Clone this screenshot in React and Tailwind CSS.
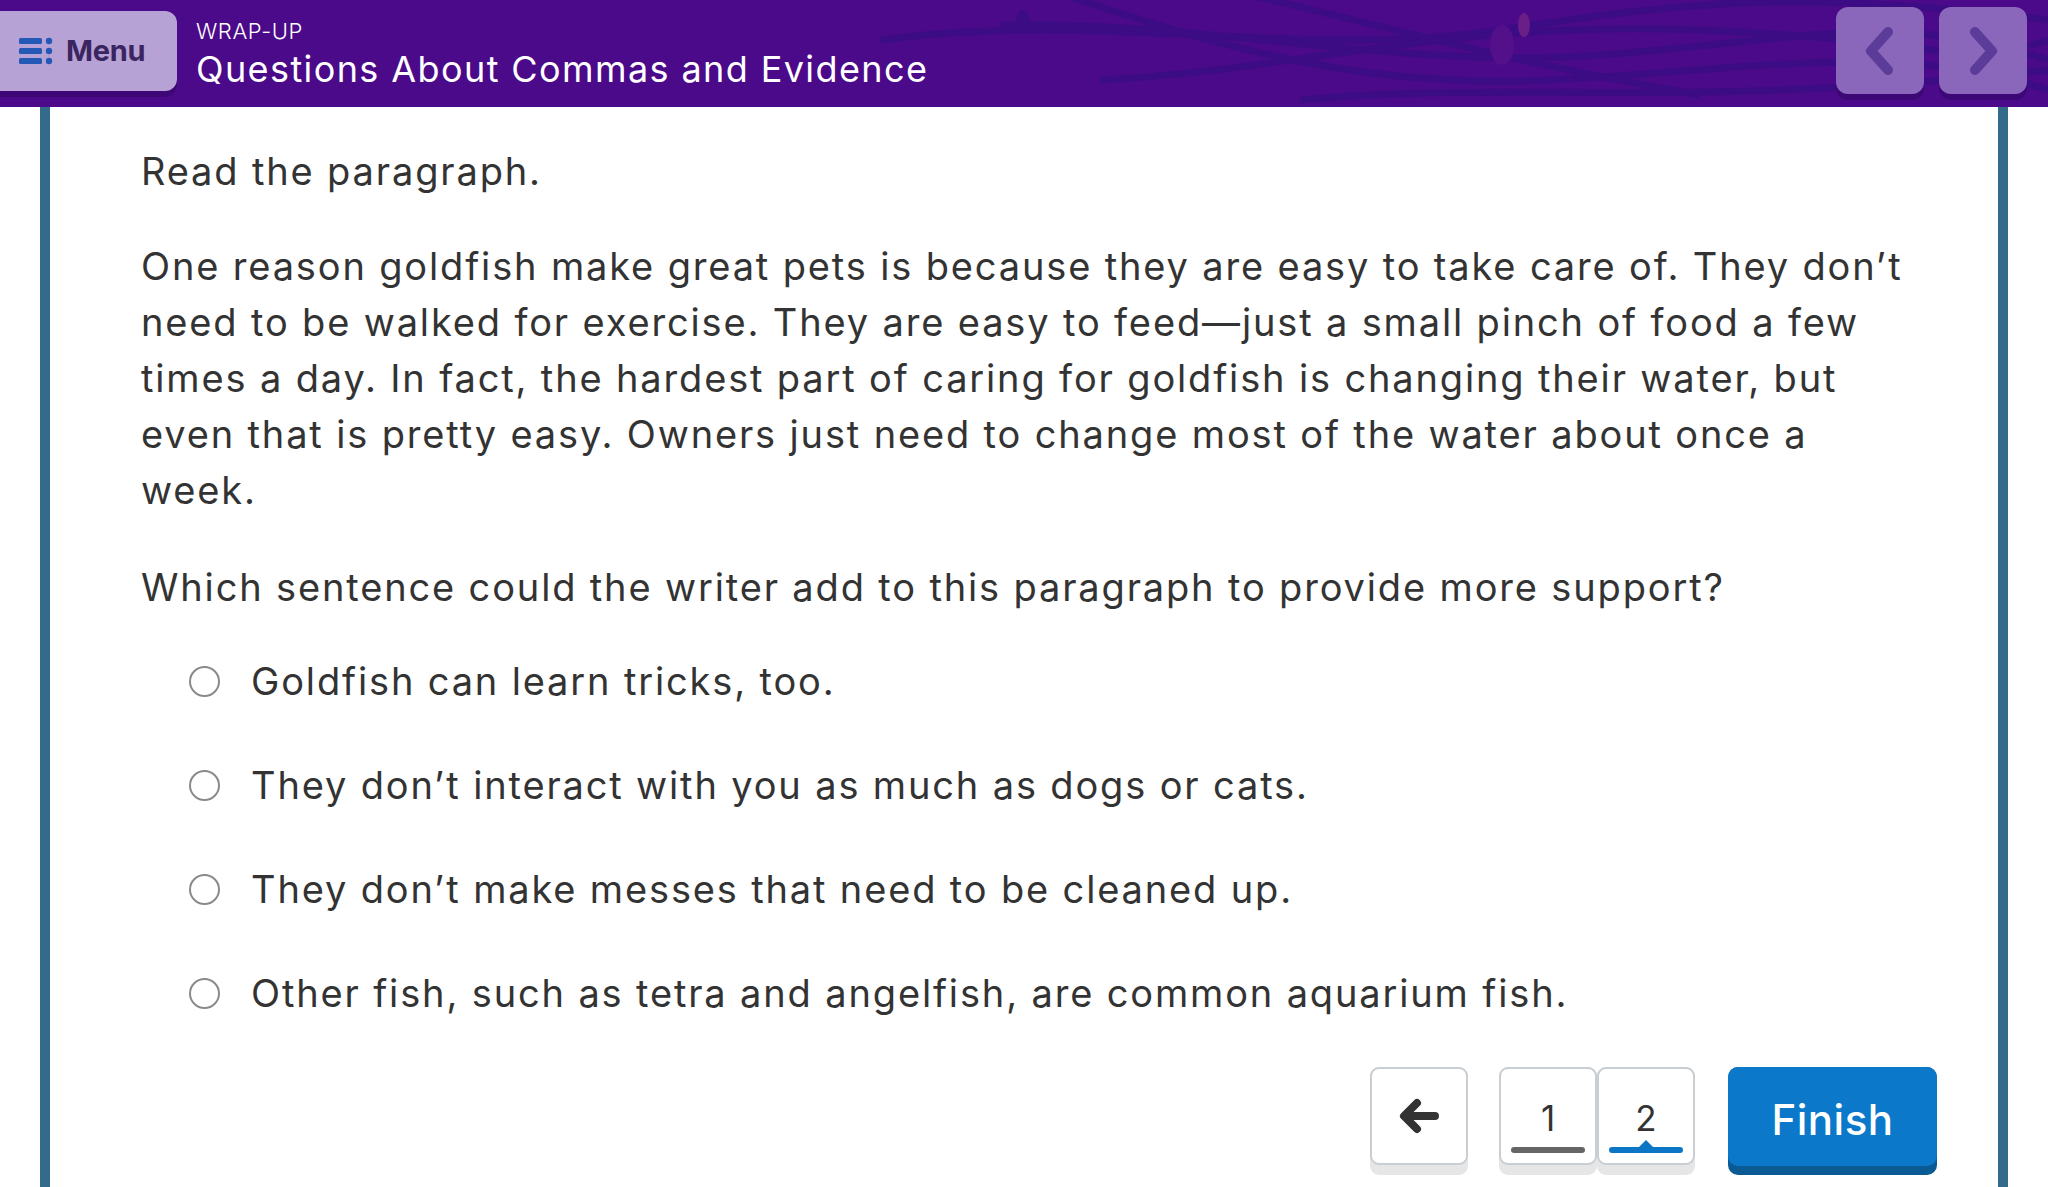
import React from "react";

const FONT = { fontFamily: "Inter, 'Noto Sans', sans-serif" };

function MenuIcon() {
  return (
    <svg width="34" height="28" viewBox="0 0 34 28">
      <rect x="0" y="1" width="23" height="6" rx="1.5" fill="#2358b6" />
      <rect x="0" y="11" width="23" height="6" rx="1.5" fill="#2358b6" />
      <rect x="0" y="21" width="23" height="6" rx="1.5" fill="#2358b6" />
      <circle cx="30" cy="4" r="3.2" fill="#2358b6" />
      <circle cx="30" cy="14" r="3.2" fill="#2358b6" />
      <circle cx="30" cy="24" r="3.2" fill="#2358b6" />
    </svg>
  );
}

function Chevron({ dir }) {
  const d = dir === "left" ? "M29 6 L12 25 L29 44" : "M13 6 L30 25 L13 44";
  return (
    <svg width="42" height="50" viewBox="0 0 42 50">
      <path d={d} fill="none" stroke="#5b3c98" strokeWidth="10" strokeLinecap="round" strokeLinejoin="round" />
    </svg>
  );
}

function Radio() {
  return <span className="block w-[31px] h-[31px] shrink-0 rounded-full border-[2.5px] border-[#8a8a8a] bg-white" />;
}

const options = [
  "Goldfish can learn tricks, too.",
  "They don\u2019t interact with you as much as dogs or cats.",
  "They don\u2019t make messes that need to be cleaned up.",
  "Other fish, such as tetra and angelfish, are common aquarium fish.",
];

export default function App() {
  return (
    <div className="w-[2048px] h-[1187px] overflow-hidden bg-white flex flex-col" style={FONT}>
      <header className="relative h-[107px] shrink-0 bg-[#4b0a89] overflow-hidden flex items-start">
        <svg className="absolute inset-0 pointer-events-none" width="2048" height="107" viewBox="0 0 2048 107">
          <g fill="none" stroke="#3c0c85" strokeWidth="7">
            <path d="M880 40 C1100 10 1300 60 1500 30 S1800 -10 2048 20" />
            <path d="M1000 25 C1200 20 1400 70 1600 55 S1900 10 2048 60" />
            <path d="M1050 -10 C1200 40 1350 90 1550 80 S1900 40 2048 90" />
            <path d="M1100 80 C1300 70 1450 20 1700 30 S1950 70 2048 40" />
            <path d="M1250 -5 C1400 30 1500 60 1700 95" />
            <path d="M1300 100 C1500 80 1700 110 2048 70" />
          </g>
          <ellipse cx="1023" cy="22" rx="7" ry="12" fill="#3c0c85" />
          <ellipse cx="1502" cy="45" rx="12" ry="20" fill="#540f8a" />
          <ellipse cx="1524" cy="25" rx="6" ry="12" fill="#6a1f88" />
          <ellipse cx="1868" cy="20" rx="8" ry="12" fill="#9a5aa0" opacity="0.6" />
        </svg>
        <div className="relative mt-[11px] w-[177px] h-[80px] bg-[#b7a2d6] rounded-r-[12px] flex items-center pl-[19px] gap-[13px] shadow-[0_6px_0_#3d0876]">
          <MenuIcon />
          <span className="text-[29px] font-bold text-[#3b2560] tracking-[-0.3px]">Menu</span>
        </div>
        <div className="relative ml-[19px] mt-[18px] flex flex-col text-white">
          <span className="text-[22px] font-light leading-[26px] tracking-[0.6px]">WRAP-UP</span>
          <span className="mt-[3px] text-[36px] font-normal leading-[44px] tracking-[1.4px]">Questions About Commas and Evidence</span>
        </div>
        <div className="relative ml-auto mr-[21px] mt-[7px] flex gap-[15px]">
          <div className="w-[88px] h-[87px] rounded-[12px] bg-[#8b67bb] flex items-center justify-center shadow-[0_6px_0_#3d0876]">
            <Chevron dir="left" />
          </div>
          <div className="w-[88px] h-[87px] rounded-[12px] bg-[#8b67bb] flex items-center justify-center shadow-[0_6px_0_#3d0876]">
            <Chevron dir="right" />
          </div>
        </div>
      </header>

      <main className="flex-1 mx-[40px] border-x-[10px] border-[#346b8b] pl-[91px] pr-[61px] pt-[36px] text-[#333333] text-[38px] leading-[56px] tracking-[1.85px]">
        <p>Read the paragraph.</p>
        <p className="mt-[39px] whitespace-nowrap">
          One reason goldfish make great pets is because they are easy to take care of. They don{"\u2019"}t
          <br />
          need to be walked for exercise. They are easy to feed{"\u2014"}just a small pinch of food a few
          <br />
          times a day. In fact, the hardest part of caring for goldfish is changing their water, but
          <br />
          even that is pretty easy. Owners just need to change most of the water about once a
          <br />
          week.
        </p>
        <p className="mt-[41px] whitespace-nowrap">
          Which sentence could the writer add to this paragraph to provide more support?
        </p>
        <div className="mt-[38px] flex flex-col gap-[48px] pl-[48px]">
          {options.map((o) => (
            <div key={o} className="flex items-center gap-[31px]">
              <Radio />
              <span className="whitespace-nowrap">{o}</span>
            </div>
          ))}
        </div>
        <div className="mt-[46px] flex justify-end items-start tracking-normal">
          <div className="w-[98px] h-[108px] rounded-[9px] bg-[#e6e6e6]">
            <div className="w-[98px] h-[98px] rounded-[9px] bg-white border-2 border-[#c9ced3] flex items-center justify-center">
              <svg width="44" height="40" viewBox="0 0 44 40">
                <path d="M38 20 H8 M20 7 L7 20 L20 33" fill="none" stroke="#333333" strokeWidth="8" strokeLinecap="round" strokeLinejoin="round" />
              </svg>
            </div>
          </div>
          <div className="ml-[31px] flex">
            <div className="w-[98px] h-[108px] rounded-[9px] bg-[#e6e6e6]">
              <div className="relative w-[98px] h-[98px] rounded-[9px] bg-white border-2 border-[#c9ced3] flex justify-center">
                <span className="mt-[29px] text-[35px] leading-[40px] text-[#333]">1</span>
                <span className="absolute left-[10px] right-[10px] bottom-[10px] h-[6px] rounded-full bg-[#666666]" />
              </div>
            </div>
            <div className="w-[98px] h-[108px] rounded-[9px] bg-[#e6e6e6]">
              <div className="relative w-[98px] h-[98px] rounded-[9px] bg-white border-2 border-[#c9ced3] flex justify-center">
                <span className="mt-[29px] text-[35px] leading-[40px] text-[#333]">2</span>
                <span className="absolute left-[10px] right-[10px] bottom-[10px] h-[6px] rounded-full bg-[#0b76c6]" />
                <span className="absolute left-1/2 -translate-x-1/2 bottom-[15px] w-0 h-0 border-l-[8px] border-r-[8px] border-b-[8px] border-l-transparent border-r-transparent border-b-[#0b76c6]" />
              </div>
            </div>
          </div>
          <div className="ml-[33px] w-[209px] h-[108px] rounded-[10px] bg-[#0a5a93]">
            <div className="w-[209px] h-[99px] rounded-[10px] bg-[#0b78c9] flex items-center justify-center pt-[6px]">
              <span className="text-[42px] font-medium text-white tracking-[0.5px]">Finish</span>
            </div>
          </div>
        </div>
      </main>
    </div>
  );
}
